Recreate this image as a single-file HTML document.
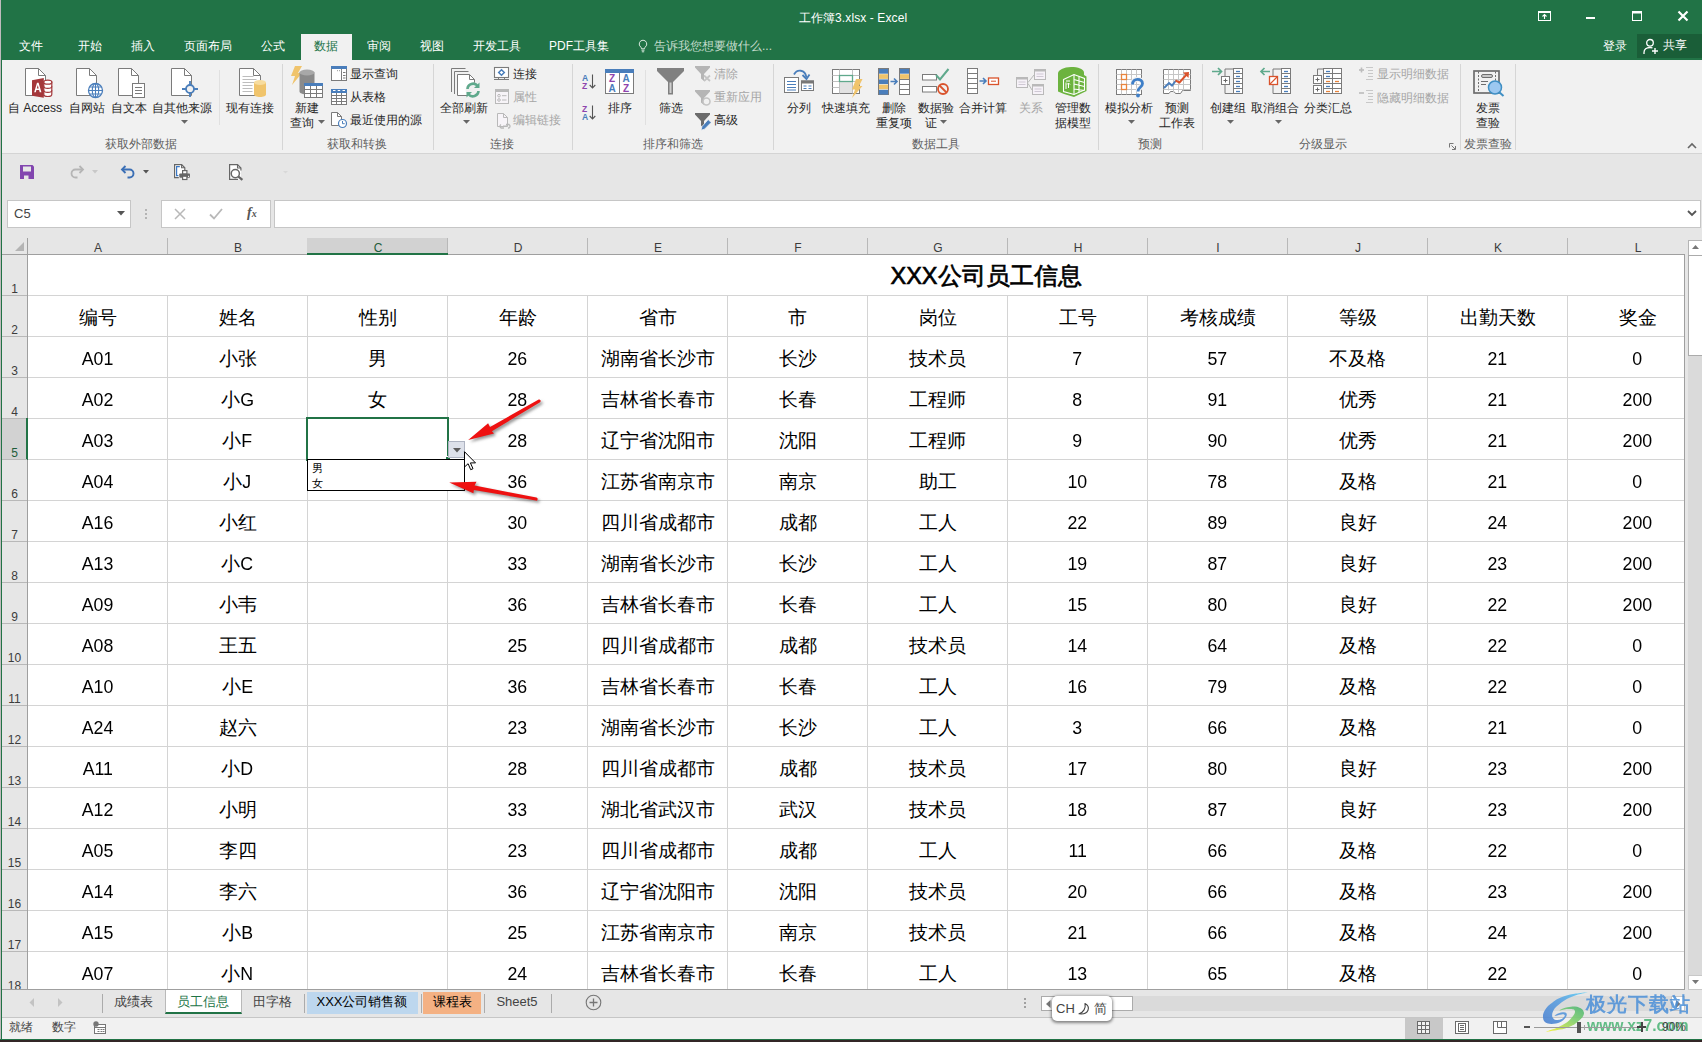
<!DOCTYPE html>
<html lang="zh"><head><meta charset="utf-8"><title>工作簿3.xlsx - Excel</title>
<style>
*{box-sizing:border-box;margin:0;padding:0}
html,body{width:1702px;height:1042px;overflow:hidden;background:#e6e6e6}
body{font-family:"Liberation Sans",sans-serif;font-size:12px;color:#262626;position:relative}
.a{position:absolute}
.t{position:absolute;white-space:nowrap;line-height:16px;height:16px}
.c{position:absolute;white-space:nowrap;line-height:16px;height:16px;text-align:center}
.g{color:#a6a6a6}
.gl{color:#5e5e5e}
.w{color:#fff}
.cell{position:absolute;width:140px;height:41px;border-right:1px solid #d4d4d4;border-bottom:1px solid #d4d4d4;text-align:center;line-height:43px;font-size:18.5px;color:#000;white-space:nowrap;overflow:hidden;background:#fff}
.n{display:inline-block;transform:scaleX(.96)}
.ch{position:absolute;top:238px;height:16px;width:140px;text-align:center;line-height:20px;font-size:12px;color:#3c3c3c}
.rh{position:absolute;left:2px;width:25px;text-align:center;font-size:12px;line-height:14px;color:#3c3c3c;height:14px}
.vs{position:absolute;width:1px;background:#d8d8d8}
svg{position:absolute;overflow:visible}
</style></head>
<body>
<!-- chrome_top -->
<div class="a" style="left:0px;top:0px;width:1px;height:1042px;background:#c0bbbd;"></div>
<div class="a" style="left:1px;top:0px;width:1px;height:1040px;background:#217346;"></div>
<div class="a" style="left:1px;top:0px;width:1701px;height:60px;background:#217346;"></div>
<span class="c w" style="left:753px;width:200px;top:10px;font-size:12px;letter-spacing:.1px">工作簿3.xlsx - Excel</span>
<svg style="left:1538px;top:11px" width="13" height="10" viewBox="0 0 13 10"><rect x="0.500" y="0.500" width="12" height="9" fill="none" stroke="#fff"/><rect x="0" y="0" width="13" height="2" fill="#fff"/><path d="M6.500 8V4M4.500 5.500l2-2 2 2" fill="none" stroke="#fff" stroke-width="1.100"/></svg>
<div class="a" style="left:1586px;top:17px;width:9px;height:2px;background:#fff;"></div>
<svg style="left:1632px;top:11px" width="10" height="10"><rect x="0.5" y="0.5" width="9" height="9" fill="none" stroke="#fff"/><rect x="0" y="0" width="10" height="2.5" fill="#fff"/></svg>
<svg style="left:1678px;top:11px" width="10" height="10"><path d="M0.5 0.5L9.5 9.5M9.5 0.5L0.5 9.5" stroke="#fff" stroke-width="2.200"/></svg>
<span class="c w" style="left:-29px;width:120px;top:38px;">文件</span>
<span class="c w" style="left:30px;width:120px;top:38px;">开始</span>
<span class="c w" style="left:83px;width:120px;top:38px;">插入</span>
<span class="c w" style="left:148px;width:120px;top:38px;">页面布局</span>
<span class="c w" style="left:213px;width:120px;top:38px;">公式</span>
<span class="c w" style="left:319px;width:120px;top:38px;">审阅</span>
<span class="c w" style="left:372px;width:120px;top:38px;">视图</span>
<span class="c w" style="left:437px;width:120px;top:38px;">开发工具</span>
<span class="c w" style="left:519px;width:120px;top:38px;">PDF工具集</span>
<div class="a" style="left:301px;top:34px;width:51px;height:27px;background:#f1f1f1;"></div>
<span class="c" style="left:266px;width:120px;top:38px;color:#217346">数据</span>
<svg style="left:637px;top:39px" width="12" height="15" viewBox="0 0 12 15"><path d="M6 1.2a3.8 3.8 0 0 0-2.3 6.8c.5.5.8 1 .8 1.8h3c0-.8.3-1.3.8-1.8A3.8 3.8 0 0 0 6 1.2Z" fill="none" stroke="#d7e8dd" stroke-width="1"/><path d="M4.5 11.2h3M4.8 12.8h2.4" stroke="#d7e8dd" stroke-width="1"/></svg>
<span class="t" style="left:654px;top:38px;color:#c4dccd">告诉我您想要做什么...</span>
<span class="c w" style="left:1555px;width:120px;top:38px;">登录</span>
<div class="a" style="left:1637px;top:34px;width:65px;height:24px;background:#1a5e38;"></div>
<svg style="left:1643px;top:38px" width="16" height="17" viewBox="0 0 16 17"><circle cx="7" cy="4.8" r="3.3" fill="none" stroke="#fff" stroke-width="1.3"/><path d="M1 16v-1.5c0-3 2.5-5 6-5 1 0 1.8.2 2.5.5" fill="none" stroke="#fff" stroke-width="1.3"/><path d="M12 10v6M9 13h6" stroke="#fff" stroke-width="1.4"/></svg>
<span class="c w" style="left:1655px;width:40px;top:37px;">共享</span>
<div class="a" style="left:2px;top:60px;width:1700px;height:93px;background:#f1f1f1;"></div>
<div class="a" style="left:2px;top:153px;width:1700px;height:1px;background:#d4d4d4;"></div>
<svg style="left:20px;top:165px" width="14" height="14" viewBox="0 0 14 14"><path d="M0 0h12.500L14 1.500V14H0Z" fill="#8246af"/><rect x="3" y="1.500" width="8" height="5" fill="#e6e6e6"/><rect x="4" y="10.500" width="4.500" height="3.500" fill="#e6e6e6"/></svg>
<svg style="left:69px;top:165px" width="16" height="14" viewBox="0 0 16 14"><path d="M13 4.500H6.500a4 4 0 0 0 0 8h2" fill="none" stroke="#b5b5b5" stroke-width="1.800"/><path d="M10.500 1l3.500 3.500-3.500 3.500" fill="none" stroke="#b5b5b5" stroke-width="1.800"/></svg>
<svg style="left:92px;top:170px" width="6" height="4"><path d="M0 0h6L3 3.5Z" fill="#c8c8c8"/></svg>
<svg style="left:120px;top:165px" width="16" height="14" viewBox="0 0 16 14"><path d="M3 4.500h6.500a4 4 0 0 1 0 8h-2" fill="none" stroke="#3b6fb5" stroke-width="1.900"/><path d="M5.500 1L2 4.500 5.500 8" fill="none" stroke="#3b6fb5" stroke-width="1.900"/></svg>
<svg style="left:143px;top:170px" width="6" height="4"><path d="M0 0h6L3 3.5Z" fill="#555"/></svg>
<svg style="left:174px;top:164px" width="17" height="17" viewBox="0 0 17 17"><path d="M0.600 0.600h7l3.200 3.200v10h-10.200Z" fill="#fff"/><path d="M4.800 13.600H0.600V0.600h7l3.200 3.200v3" fill="none" stroke="#666" stroke-width="1.200"/><path d="M7.600 0.600v3.200h3.200" fill="none" stroke="#666" stroke-width="1.100"/><path d="M5.800 2.600h-3.200v9h1.800" fill="none" stroke="#3b78c4" stroke-width="1.200"/><rect x="8.600" y="6.600" width="4.300" height="3.500" fill="#fff" stroke="#666" stroke-width="1.200"/><rect x="5.300" y="9.400" width="10.700" height="4.400" rx=".8" fill="#666"/><rect x="8.600" y="12.200" width="4.300" height="3.300" fill="#fff" stroke="#666" stroke-width="1.200"/><rect x="14" y="11.800" width="1.100" height="1.100" fill="#fff"/></svg>
<svg style="left:229px;top:164px" width="15" height="17" viewBox="0 0 15 17"><path d="M0.600 0.600h7.900l3.400 3.400v11.400h-11.300Z" fill="#fff"/><path d="M9 15.400H0.600V0.600h7.900l3.400 3.400v2.500" fill="none" stroke="#666" stroke-width="1.200"/><path d="M8.500 0.600v3.400h3.400" fill="none" stroke="#666" stroke-width="1.100"/><path d="M9.400 12.700L13.400 15.800" stroke="#666" stroke-width="2.300"/><circle cx="6.300" cy="9.600" r="4.100" fill="#fff" stroke="#666" stroke-width="1.500"/></svg>
<svg style="left:283px;top:171px" width="5" height="3"><path d="M0 0h5L2.5 2.5Z" fill="#d8d8d8"/></svg>
<div class="a" style="left:7px;top:200px;width:124px;height:28px;background:#fff;border:1px solid #c6c6c6"></div>
<span class="t" style="left:14px;top:206px;font-size:13px;color:#444">C5</span>
<svg style="left:117px;top:211px" width="8" height="5"><path d="M0 0h8L4 4.5Z" fill="#555"/></svg>
<div class="a" style="left:145px;top:209px;width:2px;height:2px;background:#b4b4b4;"></div>
<div class="a" style="left:145px;top:213px;width:2px;height:2px;background:#b4b4b4;"></div>
<div class="a" style="left:145px;top:217px;width:2px;height:2px;background:#b4b4b4;"></div>
<div class="a" style="left:161px;top:200px;width:110px;height:28px;background:#fff;border:1px solid #c6c6c6"></div>
<svg style="left:174px;top:208px" width="12" height="12"><path d="M1 1L11 11M11 1L1 11" stroke="#b8b8b8" stroke-width="1.5"/></svg>
<svg style="left:209px;top:208px" width="14" height="12"><path d="M1 6.5L5 10.5 13 1" fill="none" stroke="#b8b8b8" stroke-width="1.8"/></svg>
<span class="t" style="left:247px;top:205px;font-family:'Liberation Serif',serif;font-size:14px;color:#555;font-weight:bold"><i>f</i><span style="font-size:10px"><i>x</i></span></span>
<div class="a" style="left:274px;top:200px;width:1427px;height:28px;background:#fff;border:1px solid #c6c6c6"></div>
<svg style="left:1687px;top:210px" width="10" height="7"><path d="M1 1L5 5 9 1" fill="none" stroke="#555" stroke-width="1.8"/></svg>
<!-- ribbon -->
<svg style="left:25px;top:68px" width="28" height="31" viewBox="0 0 28 31"><path d="M0.5 0.5h13l7 7v20h-20Z" fill="#fff" stroke="#7b7b7b" stroke-width="1"/><path d="M13.5 0.5v7h7" fill="none" stroke="#7b7b7b" stroke-width="1"/><path d="M18.800 14.200v12c0 1.300 1.800 2.300 4 2.300s4-1 4-2.300v-12Z" fill="#fff" stroke="#a4373a" stroke-width="1.200"/><ellipse cx="22.800" cy="14.200" rx="4" ry="2" fill="#fff" stroke="#a4373a" stroke-width="1.200"/><path d="M18.800 18.300c0 1.200 1.800 2.100 4 2.100s4-.9 4-2.100M18.800 22.300c0 1.200 1.800 2.100 4 2.100s4-.9 4-2.100" fill="none" stroke="#a4373a" stroke-width="1.200"/><path d="M7 12.200L18.800 9.900V29.800L7 27.800Z" fill="#a4373a"/><g transform="translate(-2,-.3)"><path d="M11.200 24.500L14 15h1.600l2.800 9.500h-1.700l-.6-2.200h-2.700l-.6 2.200ZM13.800 20.800h1.900l-.95-3.600Z" fill="#fff"/></g></svg>
<span class="c" style="left:-25px;width:120px;top:100px;">自 Access</span>
<svg style="left:76px;top:68px" width="28" height="31" viewBox="0 0 28 31"><path d="M0.5 0.5h13l7 7v20h-20Z" fill="#fff" stroke="#7b7b7b" stroke-width="1"/><path d="M13.5 0.5v7h7" fill="none" stroke="#7b7b7b" stroke-width="1"/><circle cx="19.5" cy="22.5" r="7" fill="#fff" stroke="#4a7ebb" stroke-width="1.3"/><ellipse cx="19.5" cy="22.5" rx="3.2" ry="7" fill="none" stroke="#4a7ebb" stroke-width="1.1"/><path d="M12.5 22.5h14M19.5 15.5v14M13.6 19h11.8M13.6 26h11.8" stroke="#4a7ebb" stroke-width="1.1"/></svg>
<span class="c" style="left:27px;width:120px;top:100px;">自网站</span>
<svg style="left:118px;top:68px" width="28" height="31" viewBox="0 0 28 31"><path d="M0.5 0.5h13l7 7v20h-20Z" fill="#fff" stroke="#7b7b7b" stroke-width="1"/><path d="M13.5 0.5v7h7" fill="none" stroke="#7b7b7b" stroke-width="1"/><rect x="14.5" y="15.5" width="12" height="14" fill="#fff" stroke="#7b7b7b"/><path d="M17 19.5h7M17 22.5h7M17 25.5h7" stroke="#7b7b7b" stroke-width="1"/></svg>
<span class="c" style="left:69px;width:120px;top:100px;">自文本</span>
<svg style="left:171px;top:68px" width="28" height="31" viewBox="0 0 28 31"><path d="M0.5 0.5h13l7 7v20h-20Z" fill="#fff" stroke="#7b7b7b" stroke-width="1"/><path d="M13.5 0.5v7h7" fill="none" stroke="#7b7b7b" stroke-width="1"/><circle cx="19" cy="21" r="4" fill="#f1f1f1" stroke="#4a7ebb" stroke-width="1.8"/><path d="M19 13v4M19 25v4M11 21h4M23 21h4" stroke="#4a7ebb" stroke-width="1.8"/></svg>
<span class="c" style="left:122px;width:120px;top:100px;">自其他来源</span>
<svg style="left:181px;top:120px" width="7" height="4"><path d="M0 0h7L3.5 3.8Z" fill="#666"/></svg>
<div class="a" style="left:219px;top:70px;width:1px;height:55px;background:#e0e0e0;"></div>
<svg style="left:239px;top:68px" width="28" height="30" viewBox="0 0 28 30"><path d="M0.5 0.5h14l7 7v20h-21Z" fill="#fff" stroke="#7b7b7b" stroke-width="1"/><path d="M14.5 0.5v7h7" fill="none" stroke="#7b7b7b" stroke-width="1"/><path d="M3.5 8.5h11M3.5 11.5h14M3.5 14.5h14M3.5 17.5h10M3.5 20.5h10M3.5 23.5h10" stroke="#bdbdbd" stroke-width="1"/><path d="M15 14.5v12c0 1.4 2.7 2.5 6 2.5s6-1.1 6-2.5v-12Z" fill="#f0c46c"/><ellipse cx="21" cy="14.5" rx="6" ry="2.5" fill="#f7dc9e"/></svg>
<span class="c" style="left:190px;width:120px;top:100px;">现有连接</span>
<span class="c gl" style="left:81px;width:120px;top:136px;">获取外部数据</span>
<div class="a" style="left:282px;top:64px;width:1px;height:86px;background:#d6d6d6;"></div>
<svg style="left:291px;top:66px" width="33" height="33" viewBox="0 0 33 33"><path d="M4 0h7L7 7h4L1 19l3-9H0Z" fill="#f0c46c"/><path d="M8.5 6.5v19c0 1.6 3.4 3 7.5 3s7.500-1.400 7.500-3v-19Z" fill="#8a8a8a"/><ellipse cx="16" cy="6.500" rx="7.500" ry="3" fill="#a8a8a8"/><rect x="13.5" y="17.500" width="18" height="14" fill="#fff" stroke="#7b7b7b"/><rect x="13" y="17" width="19" height="3" fill="#4a7ebb"/><path d="M13.500 23.500h18M13.500 27.500h18M19.500 20v11.500M25.500 20v11.500" stroke="#7b7b7b" stroke-width="1"/></svg>
<span class="c" style="left:247px;width:120px;top:100px;">新建</span>
<span class="c" style="left:242px;width:120px;top:115px;">查询</span>
<svg style="left:318px;top:120px" width="7" height="4"><path d="M0 0h7L3.5 3.8Z" fill="#666"/></svg>
<svg style="left:331px;top:66px" width="16" height="15" viewBox="0 0 16 15"><rect x="0.5" y="0.5" width="15" height="14" fill="#fff" stroke="#7b7b7b"/><rect x="0" y="0" width="16" height="3" fill="#4a7ebb"/><path d="M10.500 3v11.500" stroke="#7b7b7b"/><path d="M12 6.500h2.500M12 9.500h2.500M12 12h2.500" stroke="#7b7b7b" stroke-width="1"/><path d="M6 4.700h1M8 4.700h1M10 4.700h1" stroke="#999"/></svg>
<span class="t" style="left:350px;top:66px;">显示查询</span>
<svg style="left:331px;top:89px" width="16" height="16" viewBox="0 0 16 16"><rect x="0.5" y="0.5" width="15" height="15" fill="#fff" stroke="#7b7b7b"/><rect x="0" y="0" width="16" height="4" fill="#4a7ebb"/><path d="M0.500 6.500h15M0.500 9.500h15M0.500 12.500h15M5.500 4v11.500M10.500 4v11.500" stroke="#7b7b7b" stroke-width="1"/><path d="M2 1.500h2.500M6.700 1.500h2.500M11.500 1.500h2.500" stroke="#fff"/></svg>
<span class="t" style="left:350px;top:89px;">从表格</span>
<svg style="left:331px;top:112px" width="16" height="16" viewBox="0 0 16 16"><path d="M0.5 0.5h6l4 4v9h-10Z" fill="#fff" stroke="#7b7b7b" stroke-width="1"/><path d="M6.5 0.5v4h4" fill="none" stroke="#7b7b7b" stroke-width="1"/><circle cx="11.500" cy="11.500" r="4" fill="#fff" stroke="#4a7ebb" stroke-width="1.2"/><path d="M11.500 9v2.700h2.200" fill="none" stroke="#4a7ebb" stroke-width="1"/></svg>
<span class="t" style="left:350px;top:112px;">最近使用的源</span>
<span class="c gl" style="left:297px;width:120px;top:136px;">获取和转换</span>
<div class="a" style="left:433px;top:64px;width:1px;height:86px;background:#d6d6d6;"></div>
<svg style="left:451px;top:68px" width="30" height="31" viewBox="0 0 30 31"><path d="M0.500 24V0.500h14" fill="none" stroke="#7b7b7b"/><path d="M3.500 26V3.500h14" fill="none" stroke="#7b7b7b"/><path d="M6.5 6.5h12l5 5v16h-17Z" fill="#fff" stroke="#7b7b7b" stroke-width="1"/><path d="M18.5 6.5v5h5" fill="none" stroke="#7b7b7b" stroke-width="1"/><circle cx="22" cy="22" r="7.500" fill="#f1f1f1"/><path d="M16.500 21a5.600 5.600 0 0 1 10-3.200" fill="none" stroke="#5fa98c" stroke-width="2.600"/><path d="M28.500 14.500v5.500h-5.500Z" fill="#5fa98c"/><path d="M27.500 23a5.600 5.600 0 0 1-10 3.200" fill="none" stroke="#5fa98c" stroke-width="2.600"/><path d="M15.500 29.500v-5.500h5.500Z" fill="#5fa98c"/></svg>
<span class="c" style="left:404px;width:120px;top:100px;">全部刷新</span>
<svg style="left:463px;top:120px" width="7" height="4"><path d="M0 0h7L3.5 3.8Z" fill="#666"/></svg>
<svg style="left:494px;top:67px" width="16" height="14" viewBox="0 0 16 14"><rect x="0.5" y="0.5" width="14" height="10" fill="#fff" stroke="#7b7b7b" stroke-width="1.1"/><path d="M0 12.500h15M4 12.500l1-2M11 12.500l-1-2" stroke="#7b7b7b" fill="none"/><path d="M7.500 2.700L10.300 5.500 7.500 8.300 4.700 5.500Z" fill="#fff" stroke="#4a7ebb" stroke-width="1.500"/></svg>
<span class="t" style="left:513px;top:66px;">连接</span>
<svg style="left:495px;top:89px" width="14" height="15" viewBox="0 0 14 15"><rect x="0.5" y="0.5" width="13" height="14" fill="#f7f4f8" stroke="#b9b9b9"/><rect x="0" y="0" width="14" height="3" fill="#b9b9b9"/><circle cx="4" cy="6.700" r="1.300" fill="none" stroke="#b9b9b9"/><circle cx="4" cy="11" r="1.300" fill="none" stroke="#b9b9b9"/><path d="M7 6.700h4.500M7 11h4.500" stroke="#b9b9b9"/></svg>
<span class="t g" style="left:513px;top:89px;">属性</span>
<svg style="left:497px;top:113px" width="15" height="16" viewBox="0 0 15 16"><path d="M0.5 0.5h6l4 4v9h-10Z" fill="#f7f4f8" stroke="#b9b9b9" stroke-width="1"/><path d="M6.5 0.5v4h4" fill="none" stroke="#b9b9b9" stroke-width="1"/><path d="M4 11.500a2 2 0 0 0 0 3.500h3M9 11.500h3a2 2 0 0 1 0 3.500h-1M6 13.200h4" fill="none" stroke="#b9b9b9" stroke-width="1.300"/></svg>
<span class="t g" style="left:513px;top:112px;">编辑链接</span>
<span class="c gl" style="left:442px;width:120px;top:136px;">连接</span>
<div class="a" style="left:572px;top:64px;width:1px;height:86px;background:#d6d6d6;"></div>
<svg style="left:582px;top:74px" width="14" height="16" viewBox="0 0 14 16"><text x="0" y="7" font-size="8.500" font-weight="bold" fill="#4a7ebb" font-family="Liberation Sans,sans-serif">A</text><text x="0" y="15" font-size="8.500" font-weight="bold" fill="#8e44ad" font-family="Liberation Sans,sans-serif">Z</text><path d="M10.500 0.500v13.500M7.700 11l2.800 3 2.800-3" fill="none" stroke="#555" stroke-width="1.100"/></svg>
<svg style="left:582px;top:105px" width="14" height="16" viewBox="0 0 14 16"><text x="0" y="7" font-size="8.500" font-weight="bold" fill="#8e44ad" font-family="Liberation Sans,sans-serif">Z</text><text x="0" y="15" font-size="8.500" font-weight="bold" fill="#4a7ebb" font-family="Liberation Sans,sans-serif">A</text><path d="M10.500 0.500v13.500M7.700 11l2.800 3 2.800-3" fill="none" stroke="#555" stroke-width="1.100"/></svg>
<svg style="left:605px;top:69px" width="29" height="25" viewBox="0 0 29 25"><rect x="0.5" y="0.5" width="28" height="24" fill="#fff" stroke="#7b7b7b"/><rect x="0" y="0" width="29" height="4" fill="#4a7ebb"/><path d="M14.500 4v20.500" stroke="#7b7b7b"/><text x="4" y="13" font-size="10" font-weight="bold" fill="#8e44ad" font-family="Liberation Sans,sans-serif">Z</text><text x="3.5" y="23" font-size="10" font-weight="bold" fill="#4a7ebb" font-family="Liberation Sans,sans-serif">A</text><text x="17.5" y="13" font-size="10" font-weight="bold" fill="#4a7ebb" font-family="Liberation Sans,sans-serif">A</text><text x="18" y="23" font-size="10" font-weight="bold" fill="#8e44ad" font-family="Liberation Sans,sans-serif">Z</text></svg>
<span class="c" style="left:560px;width:120px;top:100px;">排序</span>
<div class="a" style="left:645px;top:70px;width:1px;height:55px;background:#e0e0e0;"></div>
<svg style="left:657px;top:68px" width="27" height="27" viewBox="0 0 27 27"><path d="M0 0h27v3L16 14v12.500h-5V14L0 3Z" fill="#808080"/><path d="M12.500 14.500h2v10.500h-2Z" fill="#cfcfcf"/></svg>
<span class="c" style="left:611px;width:120px;top:100px;">筛选</span>
<svg style="left:695px;top:66px" width="16" height="16" viewBox="0 0 16 16"><path d="M0 0h15v1.500L9 8v7l-3-2.500V8L0 1.500Z" fill="#b5b5b5"/><path d="M9 9.500l6 5.500M15 9.500l-6 5.500" stroke="#c4c4c4" stroke-width="1.800"/></svg>
<span class="t g" style="left:714px;top:66px;">清除</span>
<svg style="left:695px;top:90px" width="16" height="16" viewBox="0 0 16 16"><path d="M0 0h15v1.500L9 8v7l-3-2.500V8L0 1.500Z" fill="#b5b5b5"/><circle cx="11.500" cy="11.500" r="3.500" fill="#f1f1f1" stroke="#c4c4c4" stroke-width="1.600"/></svg>
<span class="t g" style="left:714px;top:89px;">重新应用</span>
<svg style="left:695px;top:113px" width="16" height="16" viewBox="0 0 16 16"><path d="M0 0h15v1.500L9 8v7l-3-2.500V8L0 1.500Z" fill="#6b6b6b"/><path d="M13.200 6.500L16.200 9.500 9.500 16.200 6 17.200 7 13.500Z" fill="#4a7ebb" stroke="#f1f1f1" stroke-width=".8"/></svg>
<span class="t" style="left:714px;top:112px;">高级</span>
<span class="c gl" style="left:613px;width:120px;top:136px;">排序和筛选</span>
<div class="a" style="left:773px;top:64px;width:1px;height:86px;background:#d6d6d6;"></div>
<svg style="left:784px;top:68px" width="31" height="26" viewBox="0 0 31 26"><rect x="0.5" y="9.500" width="14" height="15" fill="#fff" stroke="#7b7b7b"/><path d="M3 13.500h9M3 16.500h9M3 19.500h9M3 22h9" stroke="#4a7ebb" stroke-width="1.100"/><rect x="17.500" y="13" width="12" height="9.500" fill="#fff" stroke="#7b7b7b"/><rect x="17" y="12.500" width="13" height="3" fill="#777"/><path d="M19.500 18h3M24.500 18h3M19.500 20.500h3M24.500 20.500h3" stroke="#4a7ebb" stroke-width="1.100"/><path d="M10 6.500c3-5.500 11-5.500 12.500 3" fill="none" stroke="#4a7ebb" stroke-width="1.800"/><path d="M18.500 7l4 4 3-4.500" fill="none" stroke="#4a7ebb" stroke-width="1.800"/></svg>
<span class="c" style="left:739px;width:120px;top:100px;">分列</span>
<svg style="left:832px;top:69px" width="31" height="30" viewBox="0 0 31 30"><rect x="0.5" y="0.5" width="27" height="24" fill="#fff" stroke="#7b7b7b"/><path d="M0.500 6.500h27M0.500 12.500h27M0.500 18.500h27M7.500 0.500v24M20.500 0.500v24" stroke="#c0c0c0"/><rect x="8" y="13" width="12" height="11" fill="#e2e2e2"/><rect x="7.500" y="6.500" width="13" height="6" fill="#fff" stroke="#5fa98c" stroke-width="1.300"/><path d="M24 10h6.500l-3.500 7h3.500L20 29l3-8.500h-3Z" fill="#f0c46c"/></svg>
<span class="c" style="left:786px;width:120px;top:100px;">快速填充</span>
<svg style="left:878px;top:68px" width="32" height="27" viewBox="0 0 32 27"><rect x="0.5" y="0.5" width="10" height="26" fill="#fff" stroke="#7b7b7b"/><rect x="1" y="1" width="9" height="4.700" fill="#4a7ebb"/><rect x="1" y="6.2" width="9" height="4.700" fill="#f0c46c"/><rect x="1" y="11.4" width="9" height="4.700" fill="#4a7ebb"/><rect x="1" y="16.6" width="9" height="4.700" fill="#f0c46c"/><rect x="1" y="21.8" width="9" height="4.700" fill="#4a7ebb"/><rect x="21.5" y="0.5" width="10" height="26" fill="#fff" stroke="#7b7b7b"/><rect x="22" y="1" width="9" height="4.700" fill="#4a7ebb"/><rect x="22" y="6.2" width="9" height="4.700" fill="#f0c46c"/><path d="M21.500 11.500h10M21.500 16.500h10M21.500 21.500h10" stroke="#7b7b7b"/><path d="M12.500 13.500h6M16 10.500l3 3-3 3" fill="none" stroke="#4a7ebb" stroke-width="1.600"/></svg>
<span class="c" style="left:834px;width:120px;top:100px;">删除</span>
<span class="c" style="left:834px;width:120px;top:115px;">重复项</span>
<svg style="left:922px;top:68px" width="28" height="28" viewBox="0 0 28 28"><rect x="0.5" y="6.500" width="14" height="5.500" fill="#fff" stroke="#7b7b7b"/><rect x="0.5" y="18.500" width="14" height="5.500" fill="#fff" stroke="#7b7b7b"/><path d="M14 7l4 4.500L26.500 1" fill="none" stroke="#5fa98c" stroke-width="2"/><circle cx="21" cy="21" r="5" fill="#f1f1f1" stroke="#d9532c" stroke-width="1.800"/><path d="M17.500 17.500l7 7" stroke="#d9532c" stroke-width="1.800"/></svg>
<span class="c" style="left:876px;width:120px;top:100px;">数据验</span>
<span class="c" style="left:871px;width:120px;top:115px;">证</span>
<svg style="left:940px;top:120px" width="7" height="4"><path d="M0 0h7L3.5 3.8Z" fill="#666"/></svg>
<svg style="left:967px;top:68px" width="33" height="26" viewBox="0 0 33 26"><rect x="0.5" y="0.5" width="10" height="25" fill="#fff" stroke="#7b7b7b"/><path d="M0.500 5.500h10M0.500 10.500h10M0.500 15.500h10M0.500 20.500h10" stroke="#7b7b7b"/><path d="M12.500 13h6.500M16 10l3 3-3 3" fill="none" stroke="#4a7ebb" stroke-width="1.600"/><rect x="21.500" y="10" width="10" height="6.500" fill="#fff" stroke="#d9532c" stroke-width="1.300"/><path d="M24 13.200h5" stroke="#d9532c"/></svg>
<span class="c" style="left:923px;width:120px;top:100px;">合并计算</span>
<svg style="left:1016px;top:69px" width="30" height="27" viewBox="0 0 30 27"><path d="M12 13.500L18 6M12 14.500L16 21" stroke="#b9b9b9" fill="none"/><rect x="0.5" y="8.5" width="11" height="10" fill="#f6f2f8" stroke="#b9b9b9"/><rect x="0" y="8" width="12" height="2.500" fill="#b9b9b9"/><path d="M2.5 13h7M2.5 15.5h7" stroke="#cfc8d4"/><rect x="18.5" y="0.5" width="11" height="10" fill="#f6f2f8" stroke="#b9b9b9"/><rect x="18" y="0" width="12" height="2.500" fill="#b9b9b9"/><path d="M20.5 5h7M20.5 7.5h7" stroke="#cfc8d4"/><rect x="16.5" y="15.5" width="11" height="10" fill="#f6f2f8" stroke="#b9b9b9"/><rect x="16" y="15" width="12" height="2.500" fill="#b9b9b9"/><path d="M18.5 20h7M18.5 22.5h7" stroke="#cfc8d4"/></svg>
<span class="c g" style="left:971px;width:120px;top:100px;">关系</span>
<svg style="left:1058px;top:67px" width="29" height="30" viewBox="0 0 29 30"><path d="M0 6.500C0 3 6 0 13 0s13 2 13 5.500V8l2.500 1.500V24L16 30 6 27 0 24.500Z" fill="#6cb33f"/><path d="M5.500 12.500L16 7.500l10.500 4V23L16 27.500 5.500 24.500Z" fill="none" stroke="#fff" stroke-width="1.100"/><path d="M16 7.500v20M16 12.500l10.500 3M16 17l10.500 2.500M16 22l10.500 1.500M21 9.500v16" stroke="#fff" stroke-width="1.100" fill="none"/><path d="M8 22v-6.500M8 14h4M10.500 21v-5l-1.500 1.500M10.500 16l1.500 1.500" stroke="#fff" stroke-width="1" fill="none"/></svg>
<span class="c" style="left:1013px;width:120px;top:100px;">管理数</span>
<span class="c" style="left:1013px;width:120px;top:115px;">据模型</span>
<span class="c gl" style="left:876px;width:120px;top:136px;">数据工具</span>
<div class="a" style="left:1098px;top:64px;width:1px;height:86px;background:#d6d6d6;"></div>
<svg style="left:1116px;top:69px" width="29" height="30" viewBox="0 0 29 30"><rect x="0.5" y="0.5" width="25" height="25" fill="#fff" stroke="#7b7b7b"/><path d="M0.500 5.500h25M0.500 10.500h25M0.500 15.500h25M0.500 20.500h25M5.500 0.500v25M10.500 0.500v25M15.500 0.500v25M20.500 0.500v25" stroke="#c6c6c6"/><rect x="5.500" y="5.500" width="5" height="5" fill="#fff" stroke="#e8843c" stroke-width="1.300"/><rect x="5.500" y="15.500" width="5" height="5" fill="#fff" stroke="#e8843c" stroke-width="1.300"/><path d="M16.500 15.500c0-7 10-6.500 10-1 0 4-4.500 3.500-4.500 8" fill="none" stroke="#f1f1f1" stroke-width="5"/><path d="M16.500 15.500c0-7 10-6.500 10-1 0 4-4.500 3.500-4.500 8" fill="none" stroke="#3f7fc8" stroke-width="2.800"/><circle cx="22" cy="26.500" r="1.900" fill="#3f7fc8"/></svg>
<span class="c" style="left:1069px;width:120px;top:100px;">模拟分析</span>
<svg style="left:1128px;top:120px" width="7" height="4"><path d="M0 0h7L3.5 3.8Z" fill="#666"/></svg>
<svg style="left:1163px;top:69px" width="28" height="25" viewBox="0 0 28 25"><path d="M0.500 0.500h27v21h-8l-2 3h-5l-1.500-2h-3.500l-1.500 2H0.500Z" fill="#fff" stroke="#7b7b7b"/><path d="M0.500 5.500h27M0.500 10.500h27M0.500 15.500h27M0.500 20.500h27M5.500 0.500v21M10.500 0.500v23M15.500 0.500v23M20.500 0.500v21" stroke="#c6c6c6"/><path d="M1 19l5-5 3 2.500 4-5" fill="none" stroke="#4a7ebb" stroke-width="2"/><path d="M12.500 11.500l4 2L24 5" fill="none" stroke="#d9532c" stroke-width="2"/><path d="M20 3.500l6-.5-.5 6Z" fill="#d9532c"/></svg>
<span class="c" style="left:1117px;width:120px;top:100px;">预测</span>
<span class="c" style="left:1117px;width:120px;top:115px;">工作表</span>
<span class="c gl" style="left:1090px;width:120px;top:136px;">预测</span>
<div class="a" style="left:1202px;top:64px;width:1px;height:86px;background:#d6d6d6;"></div>
<svg style="left:1212px;top:67px" width="31" height="28" viewBox="0 0 31 28"><rect x="21.5" y="1.500" width="9" height="25" fill="#fff" stroke="#7b7b7b"/><path d="M21.5 6.5h9" stroke="#7b7b7b"/><path d="M21.5 11.5h9" stroke="#7b7b7b"/><path d="M21.5 16.5h9" stroke="#7b7b7b"/><path d="M21.5 21.5h9" stroke="#7b7b7b"/><path d="M24 4.5h4" stroke="#4a7ebb" stroke-width="1.300"/><path d="M24 9.5h4" stroke="#4a7ebb" stroke-width="1.300"/><path d="M24 14.5h4" stroke="#4a7ebb" stroke-width="1.300"/><path d="M24 19.5h4" stroke="#4a7ebb" stroke-width="1.300"/><path d="M24 24.5h4" stroke="#4a7ebb" stroke-width="1.300"/><path d="M21 2h-8v24.500h8" fill="none" stroke="#7b7b7b"/><rect x="9.500" y="9.500" width="8" height="8" fill="#fff" stroke="#7b7b7b"/><path d="M11.500 13.500h4M13.500 11.500v4" stroke="#666"/><path d="M0 4.500h9M6 1l3.500 3.500L6 8" fill="none" stroke="#5fa98c" stroke-width="1.700"/></svg>
<span class="c" style="left:1168px;width:120px;top:100px;">创建组</span>
<svg style="left:1227px;top:120px" width="7" height="4"><path d="M0 0h7L3.5 3.8Z" fill="#666"/></svg>
<svg style="left:1260px;top:67px" width="31" height="28" viewBox="0 0 31 28"><rect x="21.5" y="1.500" width="9" height="25" fill="#fff" stroke="#7b7b7b"/><path d="M21.5 6.5h9" stroke="#7b7b7b"/><path d="M21.5 11.5h9" stroke="#7b7b7b"/><path d="M21.5 16.5h9" stroke="#7b7b7b"/><path d="M21.5 21.5h9" stroke="#7b7b7b"/><path d="M24 4.5h4" stroke="#4a7ebb" stroke-width="1.300"/><path d="M24 9.5h4" stroke="#4a7ebb" stroke-width="1.300"/><path d="M24 14.5h4" stroke="#4a7ebb" stroke-width="1.300"/><path d="M24 19.5h4" stroke="#4a7ebb" stroke-width="1.300"/><path d="M24 24.5h4" stroke="#4a7ebb" stroke-width="1.300"/><path d="M21 2h-8v24.500h8" fill="none" stroke="#7b7b7b"/><rect x="9.500" y="9.500" width="8" height="8" fill="#fff" stroke="#d9532c" stroke-width="1.300"/><path d="M10 17L17 10" stroke="#d9532c" stroke-width="1.200"/><path d="M1 4.500h9M4.500 1L1 4.500 4.500 8" fill="none" stroke="#5fa98c" stroke-width="1.700"/></svg>
<span class="c" style="left:1215px;width:120px;top:100px;">取消组合</span>
<svg style="left:1275px;top:120px" width="7" height="4"><path d="M0 0h7L3.5 3.8Z" fill="#666"/></svg>
<svg style="left:1313px;top:67px" width="30" height="28" viewBox="0 0 30 28"><rect x="10.500" y="1.500" width="18" height="25" fill="#fff" stroke="#7b7b7b"/><path d="M19.500 1.500v25" stroke="#7b7b7b"/><path d="M10.500 6.5h18" stroke="#7b7b7b"/><path d="M10.500 11.5h18" stroke="#7b7b7b"/><path d="M10.500 16.5h18" stroke="#7b7b7b"/><path d="M10.500 21.5h18" stroke="#7b7b7b"/><path d="M13 4.5h4" stroke="#4a7ebb" stroke-width="1.300"/><path d="M13 9.5h4" stroke="#4a7ebb" stroke-width="1.300"/><path d="M13 14.5h4" stroke="#e8843c" stroke-width="1.300"/><path d="M22 14.5h4" stroke="#e8843c" stroke-width="1.300"/><path d="M13 19.5h4" stroke="#4a7ebb" stroke-width="1.300"/><path d="M13 24.5h4" stroke="#e8843c" stroke-width="1.300"/><path d="M22 24.5h4" stroke="#e8843c" stroke-width="1.300"/><path d="M10.500 2h-6v6" fill="none" stroke="#7b7b7b"/><rect x="0.500" y="8.500" width="8" height="8" fill="#fff" stroke="#7b7b7b"/><path d="M2.500 12.500h4M4.500 10.500v4" stroke="#666"/><rect x="0.500" y="18.500" width="8" height="8" fill="#fff" stroke="#7b7b7b"/><path d="M2.500 22.500h4M4.500 20.500v4" stroke="#666"/></svg>
<span class="c" style="left:1268px;width:120px;top:100px;">分类汇总</span>
<svg style="left:1359px;top:66px" width="15" height="15" viewBox="0 0 15 15"><path d="M7 1.500h7M9 4.500h5M9 7.500h5M9 10.500h5M7 13.500h7" stroke="#c8c8c8"/><path d="M0 4h5" stroke="#bcbcbc" stroke-width="1.600"/><path d="M2.500 1.500v5" stroke="#bcbcbc" stroke-width="1.600"/></svg>
<span class="t g" style="left:1377px;top:66px;">显示明细数据</span>
<svg style="left:1359px;top:89px" width="15" height="15" viewBox="0 0 15 15"><path d="M7 1.500h7M9 4.500h5M9 7.500h5M9 10.500h5M7 13.500h7" stroke="#c8c8c8"/><path d="M0 4h5" stroke="#bcbcbc" stroke-width="1.600"/></svg>
<span class="t g" style="left:1377px;top:90px;">隐藏明细数据</span>
<span class="c gl" style="left:1263px;width:120px;top:136px;">分级显示</span>
<svg style="left:1449px;top:143px" width="7" height="7" viewBox="0 0 7 7"><path d="M0.500 4.500V0.500H4.500" fill="none" stroke="#777"/><path d="M2.500 2.500l3.500 3.500M6.500 3v3.500h-3.500" fill="none" stroke="#777" stroke-width="1"/></svg>
<div class="a" style="left:1460px;top:64px;width:1px;height:86px;background:#d6d6d6;"></div>
<svg style="left:1473px;top:70px" width="32" height="28" viewBox="0 0 32 28"><rect x="1" y="1" width="25" height="22" fill="#f1f1f1" stroke="#6e6e6e" stroke-width="1.700"/><path d="M5.500 1.500v21M22.500 1.500v10" stroke="#6e6e6e" stroke-dasharray="2 1.500"/><rect x="8.500" y="4.500" width="11" height="3" rx="1.500" fill="#c8c8c8" stroke="#6e6e6e"/><path d="M8 11.500h7M8 14.500h5" stroke="#6e6e6e" stroke-width="1.200"/><path d="M26 22l4.500 4" stroke="#3f8fc4" stroke-width="2"/><circle cx="22" cy="17.500" r="6.500" fill="#9cc8f0" stroke="#3f8fc4" stroke-width="1.500"/></svg>
<span class="c" style="left:1428px;width:120px;top:100px;">发票</span>
<span class="c" style="left:1428px;width:120px;top:115px;">查验</span>
<span class="c gl" style="left:1428px;width:120px;top:136px;">发票查验</span>
<div class="a" style="left:1515px;top:64px;width:1px;height:86px;background:#d6d6d6;"></div>
<svg style="left:1687px;top:142px" width="10" height="7" viewBox="0 0 10 7"><path d="M1 6l4-4 4 4" fill="none" stroke="#666" stroke-width="1.600"/></svg>
<!-- grid -->
<div class="a" style="left:2px;top:238px;width:1683px;height:752px;overflow:hidden;background:#e6e6e6">
<div class="a" style="left:26px;top:17px;width:1656px;height:735px;background:#fff"></div>
<div class="ch" style="left:26px;top:0px">A</div>
<div class="a" style="left:165px;top:0px;width:1px;height:16px;background:#b8b8b8"></div>
<div class="ch" style="left:166px;top:0px">B</div>
<div class="a" style="left:305px;top:0px;width:1px;height:16px;background:#b8b8b8"></div>
<div class="a" style="left:305px;top:0px;width:141px;height:17px;background:#d2d2d2;border-bottom:2px solid #217346"></div>
<div class="ch" style="left:306px;top:0px;color:#1e5c3a">C</div>
<div class="a" style="left:445px;top:0px;width:1px;height:16px;background:#b8b8b8"></div>
<div class="ch" style="left:446px;top:0px">D</div>
<div class="a" style="left:585px;top:0px;width:1px;height:16px;background:#b8b8b8"></div>
<div class="ch" style="left:586px;top:0px">E</div>
<div class="a" style="left:725px;top:0px;width:1px;height:16px;background:#b8b8b8"></div>
<div class="ch" style="left:726px;top:0px">F</div>
<div class="a" style="left:865px;top:0px;width:1px;height:16px;background:#b8b8b8"></div>
<div class="ch" style="left:866px;top:0px">G</div>
<div class="a" style="left:1005px;top:0px;width:1px;height:16px;background:#b8b8b8"></div>
<div class="ch" style="left:1006px;top:0px">H</div>
<div class="a" style="left:1145px;top:0px;width:1px;height:16px;background:#b8b8b8"></div>
<div class="ch" style="left:1146px;top:0px">I</div>
<div class="a" style="left:1285px;top:0px;width:1px;height:16px;background:#b8b8b8"></div>
<div class="ch" style="left:1286px;top:0px">J</div>
<div class="a" style="left:1425px;top:0px;width:1px;height:16px;background:#b8b8b8"></div>
<div class="ch" style="left:1426px;top:0px">K</div>
<div class="a" style="left:1565px;top:0px;width:1px;height:16px;background:#b8b8b8"></div>
<div class="ch" style="left:1566px;top:0px">L</div>
<div class="a" style="left:1705px;top:0px;width:1px;height:16px;background:#b8b8b8"></div>
<svg style="left:13px;top:4px" width="9" height="9"><path d="M9 0V9H0Z" fill="#b4b4b4"/></svg>
<div class="a" style="left:0;top:16px;width:1683px;height:1px;background:#9f9f9f"></div>
<div class="a" style="left:305px;top:15px;width:141px;height:2px;background:#217346"></div>
<div class="a" style="left:25px;top:0px;width:1px;height:752px;background:#9f9f9f"></div>
<div class="cell" style="left:26px;top:17px;width:1856px;text-align:left"></div>
<div class="a" style="left:834px;top:17px;width:300px;height:40px;line-height:43px;text-align:center;font-size:23.5px;-webkit-text-stroke:.65px #000;color:#000;white-space:nowrap">XXX公司员工信息</div>
<div class="cell" style="left:26px;top:58px">编号</div>
<div class="cell" style="left:166px;top:58px">姓名</div>
<div class="cell" style="left:306px;top:58px">性别</div>
<div class="cell" style="left:446px;top:58px">年龄</div>
<div class="cell" style="left:586px;top:58px">省市</div>
<div class="cell" style="left:726px;top:58px">市</div>
<div class="cell" style="left:866px;top:58px">岗位</div>
<div class="cell" style="left:1006px;top:58px">工号</div>
<div class="cell" style="left:1146px;top:58px">考核成绩</div>
<div class="cell" style="left:1286px;top:58px">等级</div>
<div class="cell" style="left:1426px;top:58px">出勤天数</div>
<div class="cell" style="left:1566px;top:58px">奖金</div>
<div class="cell" style="left:26px;top:99px"><span class="n">A01</span></div>
<div class="cell" style="left:166px;top:99px">小张</div>
<div class="cell" style="left:306px;top:99px">男</div>
<div class="cell" style="left:446px;top:99px"><span class="n">26</span></div>
<div class="cell" style="left:586px;top:99px">湖南省长沙市</div>
<div class="cell" style="left:726px;top:99px">长沙</div>
<div class="cell" style="left:866px;top:99px">技术员</div>
<div class="cell" style="left:1006px;top:99px"><span class="n">7</span></div>
<div class="cell" style="left:1146px;top:99px"><span class="n">57</span></div>
<div class="cell" style="left:1286px;top:99px">不及格</div>
<div class="cell" style="left:1426px;top:99px"><span class="n">21</span></div>
<div class="cell" style="left:1566px;top:99px"><span class="n">0</span></div>
<div class="cell" style="left:26px;top:140px"><span class="n">A02</span></div>
<div class="cell" style="left:166px;top:140px">小<span class="n">G</span></div>
<div class="cell" style="left:306px;top:140px">女</div>
<div class="cell" style="left:446px;top:140px"><span class="n">28</span></div>
<div class="cell" style="left:586px;top:140px">吉林省长春市</div>
<div class="cell" style="left:726px;top:140px">长春</div>
<div class="cell" style="left:866px;top:140px">工程师</div>
<div class="cell" style="left:1006px;top:140px"><span class="n">8</span></div>
<div class="cell" style="left:1146px;top:140px"><span class="n">91</span></div>
<div class="cell" style="left:1286px;top:140px">优秀</div>
<div class="cell" style="left:1426px;top:140px"><span class="n">21</span></div>
<div class="cell" style="left:1566px;top:140px"><span class="n">200</span></div>
<div class="cell" style="left:26px;top:181px"><span class="n">A03</span></div>
<div class="cell" style="left:166px;top:181px">小<span class="n">F</span></div>
<div class="cell" style="left:306px;top:181px"></div>
<div class="cell" style="left:446px;top:181px"><span class="n">28</span></div>
<div class="cell" style="left:586px;top:181px">辽宁省沈阳市</div>
<div class="cell" style="left:726px;top:181px">沈阳</div>
<div class="cell" style="left:866px;top:181px">工程师</div>
<div class="cell" style="left:1006px;top:181px"><span class="n">9</span></div>
<div class="cell" style="left:1146px;top:181px"><span class="n">90</span></div>
<div class="cell" style="left:1286px;top:181px">优秀</div>
<div class="cell" style="left:1426px;top:181px"><span class="n">21</span></div>
<div class="cell" style="left:1566px;top:181px"><span class="n">200</span></div>
<div class="cell" style="left:26px;top:222px"><span class="n">A04</span></div>
<div class="cell" style="left:166px;top:222px">小<span class="n">J</span></div>
<div class="cell" style="left:306px;top:222px"></div>
<div class="cell" style="left:446px;top:222px"><span class="n">36</span></div>
<div class="cell" style="left:586px;top:222px">江苏省南京市</div>
<div class="cell" style="left:726px;top:222px">南京</div>
<div class="cell" style="left:866px;top:222px">助工</div>
<div class="cell" style="left:1006px;top:222px"><span class="n">10</span></div>
<div class="cell" style="left:1146px;top:222px"><span class="n">78</span></div>
<div class="cell" style="left:1286px;top:222px">及格</div>
<div class="cell" style="left:1426px;top:222px"><span class="n">21</span></div>
<div class="cell" style="left:1566px;top:222px"><span class="n">0</span></div>
<div class="cell" style="left:26px;top:263px"><span class="n">A16</span></div>
<div class="cell" style="left:166px;top:263px">小红</div>
<div class="cell" style="left:306px;top:263px"></div>
<div class="cell" style="left:446px;top:263px"><span class="n">30</span></div>
<div class="cell" style="left:586px;top:263px">四川省成都市</div>
<div class="cell" style="left:726px;top:263px">成都</div>
<div class="cell" style="left:866px;top:263px">工人</div>
<div class="cell" style="left:1006px;top:263px"><span class="n">22</span></div>
<div class="cell" style="left:1146px;top:263px"><span class="n">89</span></div>
<div class="cell" style="left:1286px;top:263px">良好</div>
<div class="cell" style="left:1426px;top:263px"><span class="n">24</span></div>
<div class="cell" style="left:1566px;top:263px"><span class="n">200</span></div>
<div class="cell" style="left:26px;top:304px"><span class="n">A13</span></div>
<div class="cell" style="left:166px;top:304px">小<span class="n">C</span></div>
<div class="cell" style="left:306px;top:304px"></div>
<div class="cell" style="left:446px;top:304px"><span class="n">33</span></div>
<div class="cell" style="left:586px;top:304px">湖南省长沙市</div>
<div class="cell" style="left:726px;top:304px">长沙</div>
<div class="cell" style="left:866px;top:304px">工人</div>
<div class="cell" style="left:1006px;top:304px"><span class="n">19</span></div>
<div class="cell" style="left:1146px;top:304px"><span class="n">87</span></div>
<div class="cell" style="left:1286px;top:304px">良好</div>
<div class="cell" style="left:1426px;top:304px"><span class="n">23</span></div>
<div class="cell" style="left:1566px;top:304px"><span class="n">200</span></div>
<div class="cell" style="left:26px;top:345px"><span class="n">A09</span></div>
<div class="cell" style="left:166px;top:345px">小韦</div>
<div class="cell" style="left:306px;top:345px"></div>
<div class="cell" style="left:446px;top:345px"><span class="n">36</span></div>
<div class="cell" style="left:586px;top:345px">吉林省长春市</div>
<div class="cell" style="left:726px;top:345px">长春</div>
<div class="cell" style="left:866px;top:345px">工人</div>
<div class="cell" style="left:1006px;top:345px"><span class="n">15</span></div>
<div class="cell" style="left:1146px;top:345px"><span class="n">80</span></div>
<div class="cell" style="left:1286px;top:345px">良好</div>
<div class="cell" style="left:1426px;top:345px"><span class="n">22</span></div>
<div class="cell" style="left:1566px;top:345px"><span class="n">200</span></div>
<div class="cell" style="left:26px;top:386px"><span class="n">A08</span></div>
<div class="cell" style="left:166px;top:386px">王五</div>
<div class="cell" style="left:306px;top:386px"></div>
<div class="cell" style="left:446px;top:386px"><span class="n">25</span></div>
<div class="cell" style="left:586px;top:386px">四川省成都市</div>
<div class="cell" style="left:726px;top:386px">成都</div>
<div class="cell" style="left:866px;top:386px">技术员</div>
<div class="cell" style="left:1006px;top:386px"><span class="n">14</span></div>
<div class="cell" style="left:1146px;top:386px"><span class="n">64</span></div>
<div class="cell" style="left:1286px;top:386px">及格</div>
<div class="cell" style="left:1426px;top:386px"><span class="n">22</span></div>
<div class="cell" style="left:1566px;top:386px"><span class="n">0</span></div>
<div class="cell" style="left:26px;top:427px"><span class="n">A10</span></div>
<div class="cell" style="left:166px;top:427px">小<span class="n">E</span></div>
<div class="cell" style="left:306px;top:427px"></div>
<div class="cell" style="left:446px;top:427px"><span class="n">36</span></div>
<div class="cell" style="left:586px;top:427px">吉林省长春市</div>
<div class="cell" style="left:726px;top:427px">长春</div>
<div class="cell" style="left:866px;top:427px">工人</div>
<div class="cell" style="left:1006px;top:427px"><span class="n">16</span></div>
<div class="cell" style="left:1146px;top:427px"><span class="n">79</span></div>
<div class="cell" style="left:1286px;top:427px">及格</div>
<div class="cell" style="left:1426px;top:427px"><span class="n">22</span></div>
<div class="cell" style="left:1566px;top:427px"><span class="n">0</span></div>
<div class="cell" style="left:26px;top:468px"><span class="n">A24</span></div>
<div class="cell" style="left:166px;top:468px">赵六</div>
<div class="cell" style="left:306px;top:468px"></div>
<div class="cell" style="left:446px;top:468px"><span class="n">23</span></div>
<div class="cell" style="left:586px;top:468px">湖南省长沙市</div>
<div class="cell" style="left:726px;top:468px">长沙</div>
<div class="cell" style="left:866px;top:468px">工人</div>
<div class="cell" style="left:1006px;top:468px"><span class="n">3</span></div>
<div class="cell" style="left:1146px;top:468px"><span class="n">66</span></div>
<div class="cell" style="left:1286px;top:468px">及格</div>
<div class="cell" style="left:1426px;top:468px"><span class="n">21</span></div>
<div class="cell" style="left:1566px;top:468px"><span class="n">0</span></div>
<div class="cell" style="left:26px;top:509px"><span class="n">A11</span></div>
<div class="cell" style="left:166px;top:509px">小<span class="n">D</span></div>
<div class="cell" style="left:306px;top:509px"></div>
<div class="cell" style="left:446px;top:509px"><span class="n">28</span></div>
<div class="cell" style="left:586px;top:509px">四川省成都市</div>
<div class="cell" style="left:726px;top:509px">成都</div>
<div class="cell" style="left:866px;top:509px">技术员</div>
<div class="cell" style="left:1006px;top:509px"><span class="n">17</span></div>
<div class="cell" style="left:1146px;top:509px"><span class="n">80</span></div>
<div class="cell" style="left:1286px;top:509px">良好</div>
<div class="cell" style="left:1426px;top:509px"><span class="n">23</span></div>
<div class="cell" style="left:1566px;top:509px"><span class="n">200</span></div>
<div class="cell" style="left:26px;top:550px"><span class="n">A12</span></div>
<div class="cell" style="left:166px;top:550px">小明</div>
<div class="cell" style="left:306px;top:550px"></div>
<div class="cell" style="left:446px;top:550px"><span class="n">33</span></div>
<div class="cell" style="left:586px;top:550px">湖北省武汉市</div>
<div class="cell" style="left:726px;top:550px">武汉</div>
<div class="cell" style="left:866px;top:550px">技术员</div>
<div class="cell" style="left:1006px;top:550px"><span class="n">18</span></div>
<div class="cell" style="left:1146px;top:550px"><span class="n">87</span></div>
<div class="cell" style="left:1286px;top:550px">良好</div>
<div class="cell" style="left:1426px;top:550px"><span class="n">23</span></div>
<div class="cell" style="left:1566px;top:550px"><span class="n">200</span></div>
<div class="cell" style="left:26px;top:591px"><span class="n">A05</span></div>
<div class="cell" style="left:166px;top:591px">李四</div>
<div class="cell" style="left:306px;top:591px"></div>
<div class="cell" style="left:446px;top:591px"><span class="n">23</span></div>
<div class="cell" style="left:586px;top:591px">四川省成都市</div>
<div class="cell" style="left:726px;top:591px">成都</div>
<div class="cell" style="left:866px;top:591px">工人</div>
<div class="cell" style="left:1006px;top:591px"><span class="n">11</span></div>
<div class="cell" style="left:1146px;top:591px"><span class="n">66</span></div>
<div class="cell" style="left:1286px;top:591px">及格</div>
<div class="cell" style="left:1426px;top:591px"><span class="n">22</span></div>
<div class="cell" style="left:1566px;top:591px"><span class="n">0</span></div>
<div class="cell" style="left:26px;top:632px"><span class="n">A14</span></div>
<div class="cell" style="left:166px;top:632px">李六</div>
<div class="cell" style="left:306px;top:632px"></div>
<div class="cell" style="left:446px;top:632px"><span class="n">36</span></div>
<div class="cell" style="left:586px;top:632px">辽宁省沈阳市</div>
<div class="cell" style="left:726px;top:632px">沈阳</div>
<div class="cell" style="left:866px;top:632px">技术员</div>
<div class="cell" style="left:1006px;top:632px"><span class="n">20</span></div>
<div class="cell" style="left:1146px;top:632px"><span class="n">66</span></div>
<div class="cell" style="left:1286px;top:632px">及格</div>
<div class="cell" style="left:1426px;top:632px"><span class="n">23</span></div>
<div class="cell" style="left:1566px;top:632px"><span class="n">200</span></div>
<div class="cell" style="left:26px;top:673px"><span class="n">A15</span></div>
<div class="cell" style="left:166px;top:673px">小<span class="n">B</span></div>
<div class="cell" style="left:306px;top:673px"></div>
<div class="cell" style="left:446px;top:673px"><span class="n">25</span></div>
<div class="cell" style="left:586px;top:673px">江苏省南京市</div>
<div class="cell" style="left:726px;top:673px">南京</div>
<div class="cell" style="left:866px;top:673px">技术员</div>
<div class="cell" style="left:1006px;top:673px"><span class="n">21</span></div>
<div class="cell" style="left:1146px;top:673px"><span class="n">66</span></div>
<div class="cell" style="left:1286px;top:673px">及格</div>
<div class="cell" style="left:1426px;top:673px"><span class="n">24</span></div>
<div class="cell" style="left:1566px;top:673px"><span class="n">200</span></div>
<div class="cell" style="left:26px;top:714px"><span class="n">A07</span></div>
<div class="cell" style="left:166px;top:714px">小<span class="n">N</span></div>
<div class="cell" style="left:306px;top:714px"></div>
<div class="cell" style="left:446px;top:714px"><span class="n">24</span></div>
<div class="cell" style="left:586px;top:714px">吉林省长春市</div>
<div class="cell" style="left:726px;top:714px">长春</div>
<div class="cell" style="left:866px;top:714px">工人</div>
<div class="cell" style="left:1006px;top:714px"><span class="n">13</span></div>
<div class="cell" style="left:1146px;top:714px"><span class="n">65</span></div>
<div class="cell" style="left:1286px;top:714px">及格</div>
<div class="cell" style="left:1426px;top:714px"><span class="n">22</span></div>
<div class="cell" style="left:1566px;top:714px"><span class="n">0</span></div>
<div class="rh" style="left:0px;top:44px">1</div>
<div class="a" style="left:0;top:57px;width:25px;height:1px;background:#b8b8b8"></div>
<div class="rh" style="left:0px;top:85px">2</div>
<div class="a" style="left:0;top:98px;width:25px;height:1px;background:#b8b8b8"></div>
<div class="rh" style="left:0px;top:126px">3</div>
<div class="a" style="left:0;top:139px;width:25px;height:1px;background:#b8b8b8"></div>
<div class="rh" style="left:0px;top:167px">4</div>
<div class="a" style="left:0;top:180px;width:25px;height:1px;background:#b8b8b8"></div>
<div class="a" style="left:0px;top:181px;width:26px;height:40px;background:#d2d2d2"></div><div class="a" style="left:24px;top:180px;width:2px;height:42px;background:#217346"></div>
<div class="rh" style="left:0px;top:208px;color:#1e5c3a">5</div>
<div class="a" style="left:0;top:221px;width:25px;height:1px;background:#b8b8b8"></div>
<div class="rh" style="left:0px;top:249px">6</div>
<div class="a" style="left:0;top:262px;width:25px;height:1px;background:#b8b8b8"></div>
<div class="rh" style="left:0px;top:290px">7</div>
<div class="a" style="left:0;top:303px;width:25px;height:1px;background:#b8b8b8"></div>
<div class="rh" style="left:0px;top:331px">8</div>
<div class="a" style="left:0;top:344px;width:25px;height:1px;background:#b8b8b8"></div>
<div class="rh" style="left:0px;top:372px">9</div>
<div class="a" style="left:0;top:385px;width:25px;height:1px;background:#b8b8b8"></div>
<div class="rh" style="left:0px;top:413px">10</div>
<div class="a" style="left:0;top:426px;width:25px;height:1px;background:#b8b8b8"></div>
<div class="rh" style="left:0px;top:454px">11</div>
<div class="a" style="left:0;top:467px;width:25px;height:1px;background:#b8b8b8"></div>
<div class="rh" style="left:0px;top:495px">12</div>
<div class="a" style="left:0;top:508px;width:25px;height:1px;background:#b8b8b8"></div>
<div class="rh" style="left:0px;top:536px">13</div>
<div class="a" style="left:0;top:549px;width:25px;height:1px;background:#b8b8b8"></div>
<div class="rh" style="left:0px;top:577px">14</div>
<div class="a" style="left:0;top:590px;width:25px;height:1px;background:#b8b8b8"></div>
<div class="rh" style="left:0px;top:618px">15</div>
<div class="a" style="left:0;top:631px;width:25px;height:1px;background:#b8b8b8"></div>
<div class="rh" style="left:0px;top:659px">16</div>
<div class="a" style="left:0;top:672px;width:25px;height:1px;background:#b8b8b8"></div>
<div class="rh" style="left:0px;top:700px">17</div>
<div class="a" style="left:0;top:713px;width:25px;height:1px;background:#b8b8b8"></div>
<div class="rh" style="left:0px;top:741px">18</div>
<div class="a" style="left:0;top:754px;width:25px;height:1px;background:#b8b8b8"></div>
<div class="a" style="left:1682px;top:17px;width:1px;height:735px;background:#9f9f9f"></div>
</div>
<!-- overlay -->
<div class="a" style="left:306px;top:417px;width:143px;height:44px;border:2px solid #217346"></div>
<div class="a" style="left:445px;top:456px;width:5px;height:3px;background:#fff;"></div>
<div class="a" style="left:446px;top:457px;width:4px;height:2px;background:#217346;"></div>
<div class="a" style="left:307px;top:459px;width:158px;height:32px;background:#fff;border:1px solid #000"></div>
<span class="t" style="left:312px;top:460px;font-size:11px;color:#000">男</span>
<span class="t" style="left:312px;top:475px;font-size:11px;color:#000">女</span>
<div class="a" style="left:448px;top:441px;width:17px;height:17px;background:#dde1ea;border:1px solid #aeb4c2"></div>
<svg style="left:453px;top:448px" width="8" height="5"><path d="M0 0h8L4 4.500Z" fill="#5c5c5c"/></svg>
<svg style="left:0;top:0;filter:drop-shadow(2px 2.500px 1.500px rgba(60,60,60,.55))" width="1702" height="1042" viewBox="0 0 1702 1042"><path d="M468.2 440.100L488.100 423.200 490 427 538.700 399.600a1.500 1.500 0 0 1 1.400 2.600L491.900 431.200 494 433.400Z" fill="#ee1111"/><path d="M449.200 482.500L476.500 481.800 474.600 485.600 536.400 497.600a1.500 1.500 0 0 1-.6 3L473.900 490 473.400 493.200Z" fill="#ee1111"/></svg>
<svg style="left:464px;top:451px" width="13" height="20" viewBox="0 0 13 20"><path d="M0.500 0.700V16l3.600-3.300 2.600 6 2.300-1-2.600-5.800H11.500Z" fill="#fff" stroke="#000" stroke-width="1"/></svg>
<!-- bottom -->
<div class="a" style="left:1685px;top:238px;width:17px;height:752px;background:#e6e6e6;"></div>
<div class="a" style="left:1688px;top:256px;width:14px;height:719px;background:#dadada;"></div>
<div class="a" style="left:1688px;top:240px;width:15px;height:16px;background:#fff;border:1px solid #b4b4b4"></div>
<svg style="left:1692px;top:245px" width="7" height="4" viewBox="0 0 7 4"><path d="M0 4h7L3.500 0Z" fill="#777"/></svg>
<div class="a" style="left:1688px;top:255px;width:15px;height:101px;background:#fff;border:1px solid #ababab"></div>
<div class="a" style="left:1688px;top:975px;width:15px;height:15px;background:#fff;border:1px solid #c8c8c8"></div>
<svg style="left:1692px;top:980px" width="7" height="4" viewBox="0 0 7 4"><path d="M0 0h7L3.500 4Z" fill="#777"/></svg>
<div class="a" style="left:2px;top:989px;width:1683px;height:1px;background:#9f9f9f;"></div>
<div class="a" style="left:2px;top:990px;width:1700px;height:27px;background:#e6e6e6;"></div>
<div class="a" style="left:2px;top:1017px;width:1700px;height:1px;background:#c6c6c6;"></div>
<svg style="left:29px;top:998px" width="5" height="9" viewBox="0 0 5 9"><path d="M5 0v9L0.500 4.500Z" fill="#c3c3c3"/></svg>
<svg style="left:58px;top:998px" width="5" height="9" viewBox="0 0 5 9"><path d="M0 0v9L4.500 4.500Z" fill="#c3c3c3"/></svg>
<div class="a" style="left:102px;top:994px;width:1px;height:19px;background:#ababab;"></div>
<span class="c" style="left:73px;width:120px;top:994px;font-size:13px;color:#444">成绩表</span>
<div class="a" style="left:165px;top:990px;width:77px;height:24px;background:#fff;border-bottom:2px solid #217346;border-left:1px solid #b9b9b9;border-right:1px solid #b9b9b9"></div>
<span class="c" style="left:143px;width:120px;top:994px;font-size:13px;color:#217346">员工信息</span>
<span class="c" style="left:212px;width:120px;top:994px;font-size:13px;color:#444">田字格</span>
<div class="a" style="left:304px;top:994px;width:1px;height:19px;background:#ababab;"></div>
<div class="a" style="left:307px;top:992px;width:111px;height:22px;background:#bdd7ee;"></div>
<span class="c" style="left:297px;width:130px;top:994px;font-size:13px;color:#000">XXX公司销售额</span>
<div class="a" style="left:421px;top:994px;width:1px;height:19px;background:#ababab;"></div>
<div class="a" style="left:423px;top:992px;width:58px;height:22px;background:#f4b183;"></div>
<span class="c" style="left:392px;width:120px;top:994px;font-size:13px;color:#000">课程表</span>
<div class="a" style="left:484px;top:994px;width:1px;height:19px;background:#ababab;"></div>
<span class="c" style="left:457px;width:120px;top:994px;font-size:13px;color:#444">Sheet5</span>
<div class="a" style="left:551px;top:994px;width:1px;height:19px;background:#ababab;"></div>
<svg style="left:585px;top:994px" width="17" height="17" viewBox="0 0 17 17"><circle cx="8.500" cy="8.500" r="7.300" fill="none" stroke="#777" stroke-width="1.100"/><path d="M4.500 8.500h8M8.500 4.500v8" stroke="#777" stroke-width="1.300"/></svg>
<div class="a" style="left:1024px;top:998px;width:2px;height:2px;background:#a0a0a0;"></div>
<div class="a" style="left:1024px;top:1002px;width:2px;height:2px;background:#a0a0a0;"></div>
<div class="a" style="left:1024px;top:1006px;width:2px;height:2px;background:#a0a0a0;"></div>
<div class="a" style="left:1041px;top:996px;width:644px;height:15px;background:#dadada;"></div>
<div class="a" style="left:1041px;top:996px;width:92px;height:15px;background:#fff;border:1px solid #ababab"></div>
<svg style="left:1046px;top:1000px" width="5" height="8" viewBox="0 0 5 8"><path d="M4.500 0v8L0 4Z" fill="#777"/></svg>
<div class="a" style="left:1671px;top:996px;width:14px;height:15px;background:#fff;border:1px solid #c5c5c5"></div>
<svg style="left:1676px;top:1000px" width="5" height="8" viewBox="0 0 5 8"><path d="M0 0v8L4.500 4Z" fill="#777"/></svg>
<div class="a" style="left:2px;top:1018px;width:1700px;height:21px;background:#f1f1f1;"></div>
<span class="t" style="left:9px;top:1019px;color:#444">就绪</span>
<span class="t" style="left:52px;top:1019px;color:#444">数字</span>
<svg style="left:93px;top:1021px" width="13" height="13" viewBox="0 0 13 13"><rect x="1.500" y="3.500" width="11" height="9" fill="#fff" stroke="#777"/><path d="M1.500 6.500h11M4.500 8.500h2M7.500 8.500h2M10 8.500h1.500M4.500 10.500h2M7.500 10.500h2M10 10.500h1.500" stroke="#777"/><circle cx="3" cy="3" r="2.700" fill="#777"/></svg>
<svg style="left:1542px;top:991px" width="46" height="43" viewBox="0 0 46 43"><defs><linearGradient id="wb" x1="0" y1="1" x2="1" y2="0"><stop offset="0" stop-color="#4a7fcf"/><stop offset=".55" stop-color="#5a9fe0"/><stop offset="1" stop-color="#5fd0f5"/></linearGradient><linearGradient id="wg" x1="0.1" y1="1" x2="0.9" y2="0"><stop offset="0" stop-color="#eef03a"/><stop offset=".3" stop-color="#b5dd55"/><stop offset=".6" stop-color="#7fce70"/><stop offset="1" stop-color="#55b878"/></linearGradient></defs><path d="M45.4 1.2C45.1 1.0 37.8 2.0 34.0 2.6C30.2 3.2 26.0 4.1 22.9 5.0C19.8 5.9 17.6 6.9 15.5 8.0C13.4 9.1 12.1 10.3 10.5 11.5C8.9 12.7 7.2 13.8 6.0 15.0C4.8 16.2 3.8 17.7 3.0 19.0C2.2 20.3 1.5 21.8 1.2 23.0C0.9 24.2 0.9 25.0 1.0 26.0C1.1 27.0 1.1 28.1 1.5 29.0C1.9 29.9 2.5 30.6 3.2 31.2C4.0 31.8 5.0 32.3 6.0 32.6C7.0 32.9 8.2 33.0 9.5 33.0C10.8 33.0 12.6 32.9 14.0 32.6C15.4 32.3 16.8 31.9 18.0 31.3C19.2 30.7 20.5 29.9 21.5 29.0C22.5 28.1 23.4 26.9 24.0 26.0C24.6 25.1 24.8 24.2 24.8 23.5C24.8 22.8 24.5 22.2 24.0 21.8C23.5 21.4 22.8 21.2 22.0 21.2C21.2 21.2 20.2 21.3 19.0 21.6C17.8 21.9 16.1 22.5 15.0 23.0C13.9 23.5 12.3 24.6 12.5 24.8C12.7 25.0 14.8 24.4 16.0 24.2C17.2 24.0 18.5 23.5 19.5 23.4C20.5 23.3 21.4 23.2 22.0 23.4C22.6 23.6 22.8 24.0 22.8 24.4C22.8 24.8 22.6 25.3 22.2 25.8C21.8 26.3 21.4 26.9 20.5 27.4C19.6 27.9 18.1 28.5 17.0 28.8C15.9 29.1 14.9 29.1 14.0 29.0C13.1 28.9 12.4 28.5 11.8 28.0C11.2 27.5 10.7 26.8 10.4 26.0C10.1 25.2 10.1 24.3 10.2 23.5C10.3 22.7 10.3 22.1 10.8 21.0C11.3 19.9 12.0 18.2 13.0 17.0C14.0 15.8 15.5 14.7 17.0 13.5C18.5 12.3 20.2 11.0 22.0 9.8C23.8 8.6 25.7 7.5 28.0 6.5C30.3 5.5 33.1 4.5 36.0 3.6C38.9 2.7 45.7 1.4 45.4 1.2Z" fill="url(#wb)" opacity=".9"/><path d="M17.5 19.5C17.5 19.3 19.7 18.1 21.0 17.6C22.3 17.1 24.1 16.6 25.4 16.3C26.7 16.0 27.7 15.8 29.0 15.7C30.3 15.6 31.7 15.5 33.0 15.6C34.3 15.7 35.8 16.0 37.0 16.5C38.2 17.0 39.6 17.6 40.4 18.5C41.2 19.4 41.9 20.9 42.0 22.0C42.1 23.1 41.7 24.0 41.2 25.0C40.7 26.0 39.9 26.9 39.0 27.8C38.1 28.7 37.0 29.7 36.0 30.6C35.0 31.5 34.3 32.2 33.0 33.0C31.7 33.8 29.7 34.9 28.0 35.6C26.3 36.3 24.7 36.9 23.0 37.4C21.3 37.9 19.7 38.2 18.0 38.6C16.3 39.0 14.7 39.3 13.0 39.6C11.3 39.9 9.4 40.0 8.0 40.2C6.6 40.4 4.2 40.9 4.5 40.6C4.8 40.3 8.2 39.3 10.0 38.6C11.8 37.9 13.8 37.2 15.5 36.4C17.2 35.6 18.9 34.9 20.5 34.0C22.1 33.1 24.1 32.0 25.4 31.0C26.7 30.0 27.6 29.0 28.5 28.0C29.4 27.0 30.3 25.9 31.0 25.0C31.7 24.1 32.3 23.2 32.6 22.5C32.9 21.8 33.0 21.2 33.0 20.6C33.0 20.0 32.7 19.4 32.4 19.0C32.1 18.6 31.7 18.5 31.0 18.3C30.3 18.1 28.9 18.0 28.0 18.0C27.1 18.0 26.6 18.0 25.4 18.1C24.2 18.2 22.3 18.5 21.0 18.7C19.7 18.9 17.5 19.7 17.5 19.5Z" fill="url(#wg)" opacity=".92"/></svg>
<span class="t" style="left:1586px;top:995px;font-size:20px;letter-spacing:1px;font-weight:bold;color:#4b90d8;opacity:.85;line-height:22px;height:22px;top:993px">极光下载站</span>
<span class="t" style="left:1587px;top:1018px;font-size:15.600px;font-weight:bold;color:#3fb06c;opacity:.8;line-height:18px;height:18px;top:1017px">www.xz7.com</span>
<div class="a" style="left:1405px;top:1018px;width:38px;height:21px;background:#c8c8c8;"></div>
<svg style="left:1417px;top:1021px" width="13" height="13" viewBox="0 0 13 13"><rect x="0.500" y="0.500" width="12" height="12" fill="#f1f1f1" stroke="#6a6a6a"/><path d="M0.500 4.500h12M0.500 8.500h12M4.500 0.500v12M8.500 0.500v12" stroke="#6a6a6a"/></svg>
<svg style="left:1455px;top:1021px" width="14" height="13" viewBox="0 0 14 13"><rect x="0.500" y="0.500" width="13" height="12" fill="#fff" stroke="#6a6a6a"/><rect x="3.500" y="2.500" width="7" height="8" fill="#fff" stroke="#6a6a6a"/><path d="M5 4.500h4M5 6.500h4M5 8.500h4" stroke="#6a6a6a" stroke-width="1"/></svg>
<svg style="left:1493px;top:1021px" width="14" height="13" viewBox="0 0 14 13"><rect x="0.500" y="0.500" width="13" height="12" fill="#fff" stroke="#6a6a6a"/><path d="M4.500 0.500v6M8.500 0.500v6M4.500 6.500h9" fill="none" stroke="#6a6a6a"/></svg>
<div class="a" style="left:1524px;top:1026px;width:6px;height:2px;background:#555;"></div>
<div class="a" style="left:1534px;top:1027px;width:106px;height:1px;background:#9a9a9a;"></div>
<div class="a" style="left:1584px;top:1025px;width:1px;height:5px;background:#a8a8a8;"></div>
<div class="a" style="left:1577px;top:1022px;width:4px;height:11px;background:#555;"></div>
<div class="a" style="left:1637px;top:1026px;width:9px;height:2px;background:#444;"></div>
<div class="a" style="left:1641px;top:1022px;width:2px;height:10px;background:#444;"></div>
<span class="t" style="left:1662px;top:1019px;color:#444">90%</span>
<div class="a" style="left:0px;top:1039px;width:1702px;height:1px;background:#217346;"></div>
<div class="a" style="left:0px;top:1040px;width:1702px;height:2px;background:#332626;"></div>
<div class="a" style="left:1052px;top:996px;width:60px;height:25px;background:#fff;border-radius:5px;box-shadow:0 1px 3px 1px rgba(0,0,0,.45)"></div>
<span class="t" style="left:1056px;top:1001px;font-size:13px;color:#444">CH</span>
<svg style="left:1078px;top:1003px" width="12" height="12" viewBox="0 0 12 12"><path d="M7 0.600C12.500 3.500 11.500 12 1 10.800 5.500 9.500 8 5 7 0.600Z" fill="#fff" stroke="#444" stroke-width="1.100" stroke-linejoin="round"/></svg>
<span class="t" style="left:1094px;top:1001px;font-size:13px;color:#444">简</span>
</body></html>
